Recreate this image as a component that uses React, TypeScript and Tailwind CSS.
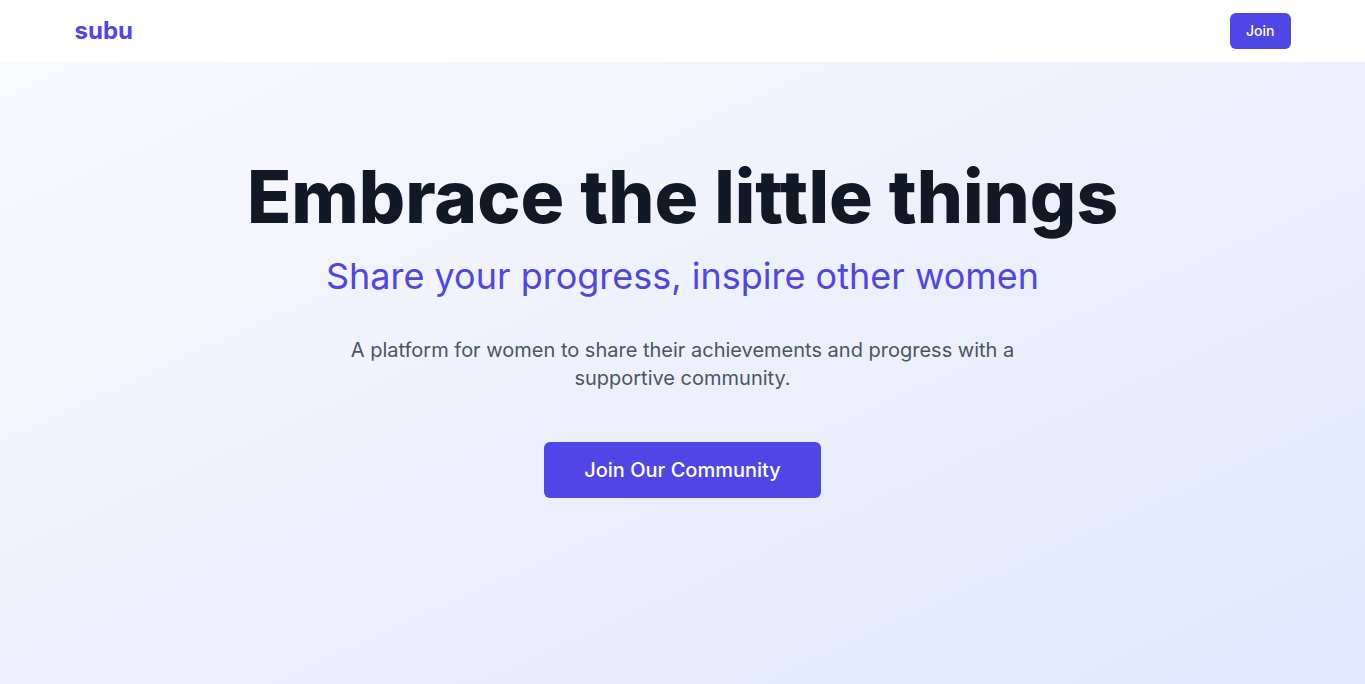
import React from "react";

export default function App() {
  return (
    <div className="min-h-screen flex flex-col bg-white" style={{ fontFamily: "Inter, 'Noto Sans', sans-serif" }}>
      <header className="bg-white">
        <div className="max-w-7xl mx-auto px-8 h-[62px] flex items-center justify-between">
          <span className="text-2xl font-bold text-[#4f46e5]">subu</span>
          <button className="bg-[#4f46e5] text-white text-sm font-medium px-4 py-2 rounded-md">Join</button>
        </div>
      </header>
      <main className="flex-1 bg-gradient-to-br from-[#f9fafb] to-[#e0e7ff]">
        <div className="max-w-7xl mx-auto px-8 pt-[99px] text-center flex flex-col items-center">
          <h1 className="text-[72.8px] leading-none font-extrabold text-[#111827]">Embrace the little things</h1>
          <p className="mt-[22px] text-4xl text-[#4f46e5]">Share your progress, inspire other women</p>
          <p className="mt-10 max-w-2xl text-xl text-[#4b5563]">
            A platform for women to share their achievements and progress with a supportive community.
          </p>
          <button className="mt-[50px] bg-[#4f46e5] text-white text-xl font-medium px-10 py-3.5 rounded-md">
            Join Our Community
          </button>
        </div>
      </main>
    </div>
  );
}
